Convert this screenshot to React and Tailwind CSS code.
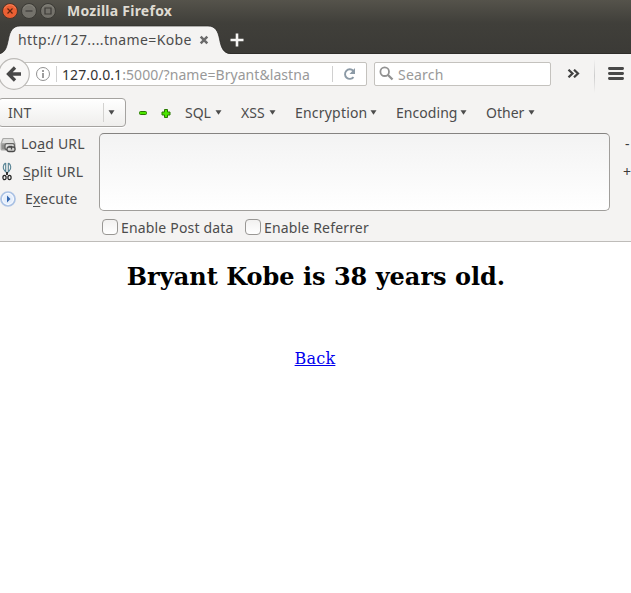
const menus = [
  { label: 'SQL', cell: 'w-[56px]', text: 'w-[28px]' },
  { label: 'XSS', cell: 'w-[54px]', text: 'w-[26px]' },
  { label: 'Encryption', cell: 'w-[101px]', text: 'w-[73px] tracking-[0.2px]' },
  { label: 'Encoding', cell: 'w-[90px]', text: 'w-[62px] tracking-[0.05px]' },
  { label: 'Other', cell: 'w-[60px]', text: 'w-[40px]' },
];

function WindowButton({ close, children }) {
  return (
    <svg className="h-4 w-4 shrink-0" viewBox="0 0 16 16" fill="none">
      <circle cx="8" cy="8" r="7.500" fill={close ? '#ea5f33' : '#74726b'} stroke={close ? '#49352b' : '#3b3a35'} />
      <path d="M2.500 5.500C4.500.7 11.500.7 13.500 5.500" stroke={close ? '#f58a62' : '#87857c'} strokeWidth=".8" />
      <g stroke={close ? '#5c2410' : '#3c3b37'} strokeWidth="1.2">{children}</g>
    </svg>
  );
}

function Caret() {
  return (
    <svg className="h-[5px] w-[7px] shrink-0" viewBox="0 0 7 5"><path d="M.5.3h6L3.500 4.800z" fill="#4c4c4c" /></svg>
  );
}

function TitleBar() {
  return (
    <div className="flex h-[23px] items-center bg-linear-to-b from-[#55534b] to-[#403f3a] pb-[2px] pl-[1.500px]">
      <div className="flex gap-[3px]">
        <WindowButton close><path d="M5.500 5.500l5 5M10.500 5.500l-5 5" /></WindowButton>
        <WindowButton><path d="M4.500 8h7" /></WindowButton>
        <WindowButton><path d="M5 5h6v6H5z" /></WindowButton>
      </div>
      <span className="ml-[11.500px] text-[14px] font-bold tracking-[0.25px] text-[#dfdbd2]">Mozilla Firefox</span>
    </div>
  );
}

function TabBar() {
  return (
    <div className="relative flex h-[31px] bg-linear-to-b from-[#403f3a] to-[#3b3a36]">
      <svg className="absolute left-0 top-0 h-[31px] w-[631px]" viewBox="0 0 631 31" fill="none">
        <path d="M0 31C6 29 7 23 8.500 16C10 8 13 3 20 3H208C215 3 218 8 219.500 16C221 24 223 31 231 31z" fill="#f4f3f2" />
        <path d="M0 30.500C6 29 7 23 8.500 16C10 8 13 3 20 3H208C215 3 218 8 219.500 16C221 24 223 30.500 231 30.500H631" stroke="#292825" strokeWidth=".7" />
        <path d="M200.700 13.700l6.600 6.600M207.300 13.700l-6.600 6.600" stroke="#6b6b6b" strokeWidth="2.500" />
        <path d="M237 10.500v13M230.500 17h13" stroke="#f6f5f3" strokeWidth="2.600" />
      </svg>
      <span className="relative pl-[18px] pt-[6px] text-[14px] leading-[22px] tracking-[0.38px] text-[#4c4c4c]">http://127....tname=Kobe</span>
    </div>
  );
}

function NavBar() {
  return (
    <div className="relative flex h-[40px] items-start pt-[8px]">
      <div className="ml-[16px] flex h-[24px] w-[351px] items-center rounded-r-[2px] border border-[#c4c2be] bg-white">
        <svg className="ml-[18px] h-4 w-4 shrink-0" viewBox="0 0 16 16" fill="none" stroke="#929292">
          <circle cx="8" cy="8" r="6.500" /><path d="M8 7v5M8 4v2" strokeWidth="1.800" />
        </svg>
        <span className="ml-[5px] h-4 w-px bg-[#d0d0d0]" />
        <span className="ml-[5px] w-[250px] overflow-hidden whitespace-nowrap text-[14px] tracking-[0.06px] text-[#999]"><span className="tracking-[0.1px] text-[#333]">127.0.0.1</span>:5000/?name=Bryant&amp;lastna</span>
        <span className="ml-[20px] h-4 w-px bg-[#d0d0d0]" />
        <svg className="ml-[10px] h-[14px] w-[14px] shrink-0" viewBox="0 0 14 14" fill="none">
          <path d="M10.500 10.200A4.800 4.800 0 1 1 10.200 3.700" stroke="#8c9aa6" strokeWidth="1.900" /><path d="M12 1v6H6.500z" fill="#8c9aa6" />
        </svg>
      </div>
      <div className="ml-[7px] flex h-[24px] w-[177px] items-center rounded-[2px] border border-[#c4c2be] bg-white pl-[4px]">
        <svg className="-mt-px h-[15px] w-[15px]" viewBox="0 0 15 15" fill="none" stroke="#929292"><circle cx="5.700" cy="5.700" r="4.300" strokeWidth="1.800" /><path d="M9 9l4.500 4.500" strokeWidth="2.300" /></svg>
        <span className="ml-[4px] text-[14px] tracking-[0.2px] text-[#999]">Search</span>
      </div>
      <svg className="ml-[16px] mt-[7px] h-[9px] w-[13px]" viewBox="0 0 13 9" fill="none" stroke="#414141" strokeWidth="2.200"><path d="M1.500 .7L5.500 4.500 1.500 8.300M7 .7l4 3.800-4 3.800" /></svg>
      <span className="-mt-[3px] ml-[14px] h-[34px] w-px bg-linear-to-b from-[#f4f3f2] via-[#ccc] to-[#f4f3f2]" />
      <svg className="ml-[13px] mt-[5px] h-[14px] w-4" viewBox="0 0 16 14" stroke="#484848" strokeWidth="2.800" strokeLinecap="round"><path d="M1.400 1.500h13.200M1.400 6.500h13.200M1.400 11.500h13.200" /></svg>
      <svg className="absolute left-[-2px] top-[4px] h-[32px] w-[32px]" viewBox="0 0 32 32" fill="none">
        <circle cx="16" cy="16" r="15.300" fill="#f8f7f6" stroke="#bcbab7" strokeWidth="1.200" />
        <path d="M23 16H11M17 9.500L10.500 16 17 22.500" stroke="#484848" strokeWidth="3.300" />
      </svg>
    </div>
  );
}

function HackBar() {
  return (
    <div className="flex h-[38px] items-center text-[14px] text-[#4c4c4c]">
      <div className="-ml-[2px] -mt-px flex h-[29px] w-[128px] items-center rounded-[4px] border border-[#a5a3a0] bg-linear-to-b from-white to-[#efeeec] pl-[9px] shadow-[0_1px_0_#fff]">
        <span className="w-[95px]">INT</span>
        <span className="mr-[4px] h-[19px] w-px bg-[#d3d2d0]" />
        <Caret />
      </div>
      <svg className="ml-[13px] h-[9px] w-[32px] shrink-0" viewBox="0 0 32 9" fill="#4ce600" stroke="#287800">
        <path d="M.5 3.500q0-1 1-1h5q1 0 1 1v1q0 1-1 1h-5q-1 0-1-1zM25.500.5h3v2.500H31v3h-2.500v2.500h-3V6H23V3h2.500z" />
      </svg>
      <div className="-mt-[2px] ml-[14px] flex">
        {menus.map(({ label, cell, text }) => (
          <div className={`flex items-center ${cell}`} key={label}>
            <span className={`mr-[2px] shrink-0 whitespace-nowrap ${text}`}>{label}</span><Caret />
          </div>
        ))}
      </div>
    </div>
  );
}

function LoadIcon() {
  return (
    <svg className="h-4 w-4 shrink-0" viewBox="0 0 16 16" fill="none">
      <path d="M3.500 1h9q1 0 1.300 1L15.500 6.500v5.500q0 1.500-1.500 1.500H2Q.5 13.500.5 12V6.500L2.200 2Q2.500 1 3.500 1z" fill="#a9a9a7" />
      <path d="M3.500 2h9L14 6H2z" fill="#dededc" /><path d="M1.500 7.500h3.500v4.500H2z" fill="#8f8f8d" />
      <rect x="5" y="6.700" width="9.500" height="6" rx="2" fill="#e6e6e4" stroke="#656563" strokeWidth="1.300" />
      <rect x="7" y="10" width="8" height="4.500" rx="1.800" fill="#d5d5d3" stroke="#4a4a4a" strokeWidth="1.300" />
      <path d="M8.500 9.500h3v3" stroke="#4a4a4a" strokeWidth="1.300" />
    </svg>
  );
}

function SplitIcon() {
  return (
    <svg className="h-[19px] w-[10px] shrink-0" viewBox="0 0 10 19" fill="none">
      <path d="M3.500 1C.7 3 .7 6.500 2.500 8.500L5 11M6.500 1C9.300 3 9.300 6.500 7.500 8.500L5 11M3.700 1v8M6.300 1v8" stroke="#568293" strokeWidth="1.100" />
      <path d="M5 10v3" stroke="#222" strokeWidth="1.800" /><ellipse cx="2.500" cy="15.500" rx="1.600" ry="2.200" stroke="#222" strokeWidth="1.200" /><ellipse cx="7.500" cy="15.500" rx="1.600" ry="2.200" stroke="#222" strokeWidth="1.200" />
    </svg>
  );
}

function ExecuteIcon() {
  return (
    <svg className="h-4 w-4 shrink-0" viewBox="0 0 16 16"><circle cx="8" cy="8" r="7" fill="#f7faff" stroke="#abc2e4" strokeWidth="1.700" /><circle cx="8" cy="8" r="5" fill="#e5eefb" /><path d="M7 4.500L10.500 8 7 11.500z" fill="#3568b0" /></svg>
  );
}

function Check({ label, className }) {
  return (
    <div className={`flex items-center ${className}`}>
      <span className="-mt-[2px] h-4 w-4 shrink-0 rounded-[4px] border border-[#999794] bg-linear-to-b from-[#f2f1f0] to-white" />
      <span className="ml-[3px] whitespace-nowrap tracking-[0.17px]">{label}</span>
    </div>
  );
}

function RequestPanel() {
  return (
    <div className="flex h-[110px] border-b border-[#bebcb9] text-[14px] leading-[20px] text-[#4c4c4c]">
      <div className="flex w-[99px] shrink-0 flex-col pt-[2px] tracking-[0.2px]">
        <div className="flex h-[28px] items-start"><div className="mt-[3px]"><LoadIcon /></div><span className="ml-[5px]">Lo<u className="underline-offset-2">a</u>d URL</span></div>
        <div className="flex h-[27px] items-start pl-[2px]"><SplitIcon /><span className="ml-[11px]"><u className="underline-offset-2">S</u>plit URL</span></div>
        <div className="flex h-[27px] items-start"><div className="mt-[2px]"><ExecuteIcon /></div><span className="ml-[9px]">E<u className="underline-offset-2">x</u>ecute</span></div>
      </div>
      <div className="w-[511px] shrink-0 pt-[1px]">
        <div className="h-[78px] rounded-[5px] border border-[#a09e9b] border-t-[#858381] bg-linear-to-b from-[#f3f3f3] to-white" />
        <div className="flex pl-[3px] pt-[7px]"><Check className="w-[143px]" label="Enable Post data" /><Check label="Enable Referrer" /></div>
      </div>
      <div className="flex w-[21px] flex-col overflow-hidden pl-[13px] pt-[2px] text-[#3c3c3c]"><span className="h-[28px] pl-[2px]">-</span><span>+</span></div>
    </div>
  );
}

export default function App() {
  return (
    <div className="h-[593px] w-[631px] overflow-hidden bg-white font-['Noto_Sans',sans-serif]">
      <header className="h-[242px] bg-[#f4f3f2]">
        <TitleBar />
        <TabBar />
        <NavBar />
        <HackBar />
        <RequestPanel />
      </header>
      <main className="pl-px pt-[20px] text-center font-['DejaVu_Serif',serif] text-black">
        <h2 className="text-[24px] font-bold leading-[29px]">Bryant Kobe is 38 years old.</h2>
        <a className="mr-[2px] mt-[58px] inline-block text-[16px] leading-[20px] tracking-[0.2px] text-[#0000ee] underline" href="#back">Back</a>
      </main>
    </div>
  );
}
